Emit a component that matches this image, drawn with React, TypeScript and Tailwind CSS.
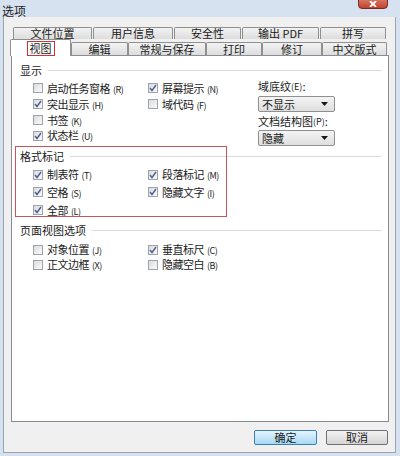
import React from "react";

const FONT = { fontFamily: '"SimSun", "Noto Sans CJK SC", "Liberation Sans", sans-serif' };

function Box({ checked }: { checked?: boolean }) {
  return (
    <span className="relative inline-flex h-[10px] w-[10px] shrink-0 items-center justify-center border border-[#9ea3ab] bg-gradient-to-br from-[#dcdcdc] to-[#fafafa]">
      {checked && (
        <svg viewBox="0 0 10 10" className="absolute h-[10px] w-[10px]">
          <path d="M2 5 L4 7.5 L8 2" fill="none" stroke="#4b5f96" strokeWidth="1.4" />
        </svg>
      )}
    </span>
  );
}

function Check({ label, k, checked, w }: { label: string; k: string; checked?: boolean; w: string }) {
  return (
    <div className={`flex items-center gap-[4px] ${w}`}>
      <Box checked={checked} />
      <span className="text-[11px] leading-none tracking-[-0.5px] text-[#1a1a1a]">
        {label}
        <span className="ml-[3px] text-[9px]">({k})</span>
      </span>
    </div>
  );
}

function Header({ text }: { text: string }) {
  return (
    <div className="flex h-[12px] items-center gap-[6px]">
      <span className="text-[11px] leading-none text-[#1a1a1a]">{text}</span>
      <span className="mr-[7px] h-px flex-1 bg-[#dadada]" />
    </div>
  );
}

function Select({ value }: { value: string }) {
  return (
    <div className="flex h-[16px] w-[77px] items-center justify-between rounded-[2px] border border-[#8e8f8f] bg-gradient-to-b from-[#f4f4f4] to-[#dedede] pl-[3px] pr-[6px]">
      <span className="text-[11px] leading-none text-[#1a1a1a]">{value}</span>
      <svg viewBox="0 0 7 4" className="h-[4px] w-[7px]">
        <path d="M0 0 L7 0 L3.5 4 Z" fill="#1a1a1a" />
      </svg>
    </div>
  );
}

function BackTab({ label, w }: { label: string; w: string }) {
  return (
    <div className={`flex h-[12px] items-center justify-center rounded-t-[2px] border border-b-0 border-[#8e8f8f] bg-gradient-to-b from-[#f3f3f3] to-[#dddddd] ${w}`}>
      <span className="text-[11px] leading-none text-[#1a1a1a]">{label}</span>
    </div>
  );
}

function FrontTab({ label, w }: { label: string; w: string }) {
  return (
    <div className={`flex h-[13px] items-center justify-center rounded-t-[2px] border border-b-0 border-[#8e8f8f] bg-gradient-to-b from-[#f3f3f3] to-[#dddddd] ${w}`}>
      <span className="text-[11px] leading-none text-[#1a1a1a]">{label}</span>
    </div>
  );
}

export default function App() {
  return (
    <div className="relative h-[456px] w-[400px] overflow-hidden bg-[#d6e2f0]" style={FONT}>
      {/* title */}
      <div className="h-[17px] pl-[2px]">
        <span className="relative top-[-3px] text-[12px] leading-none text-[#1e1e1e]">选项</span>
      </div>
      <div className="absolute right-[12px] top-[-3px] flex h-[12px] w-[30px] items-center justify-center rounded-b-[4px] border border-[#7a2a22] bg-gradient-to-b from-[#d8806e] to-[#c2412c] pt-[2px]">
        <svg viewBox="0 0 8 6" className="h-[6px] w-[8px]">
          <path d="M1 0 L7 6 M7 0 L1 6" stroke="#ffffff" strokeWidth="1.8" />
        </svg>
      </div>

      {/* dialog body */}
      <div className="ml-[3px] h-[436px] w-[393px] border-l border-r border-b border-[#9aa4b2] bg-[#f0f0f0]">
        <div className="pl-[9px] pt-[10px]">
          <div className="flex h-[12px] gap-[1px]">
            <BackTab label="文件位置" w="w-[79px]" />
            <BackTab label="用户信息" w="w-[80px]" />
            <BackTab label="安全性" w="w-[67px]" />
            <BackTab label="输出 PDF" w="w-[77px]" />
            <BackTab label="拼写" w="w-[66px]" />
          </div>
        </div>
        <div className="relative z-10 flex h-[16px] items-end pl-[6px]">
          <div className="relative top-[1px] flex h-[17px] w-[61px] items-center justify-center rounded-t-[2px] border border-b-0 border-[#8e8f8f] bg-white">
            <span className="border border-[#c9343b] px-[2px] py-[1px] text-[11px] leading-none text-[#1a1a1a]">视图</span>
          </div>
          <FrontTab label="编辑" w="w-[57px]" />
          <FrontTab label="常规与保存" w="w-[78px]" />
          <FrontTab label="打印" w="w-[56px]" />
          <FrontTab label="修订" w="w-[60px]" />
          <FrontTab label="中文版式" w="w-[65px]" />
        </div>

        {/* panel */}
        <div className="ml-[7px] h-[367px] w-[378px] border border-[#898c95] bg-white pl-[8px] pt-[8px]">
          <Header text="显示" />
          <div className="flex">
            <div className="pl-[13px] pt-[4px]">
              <div className="flex h-[16px]">
                <Check label="启动任务窗格" k="R" w="w-[115px]" />
                <Check label="屏幕提示" k="N" checked w="w-[100px]" />
              </div>
              <div className="flex h-[16px]">
                <Check label="突出显示" k="H" checked w="w-[115px]" />
                <Check label="域代码" k="F" w="w-[100px]" />
              </div>
              <div className="flex h-[16px]">
                <Check label="书签" k="K" w="w-[115px]" />
              </div>
              <div className="flex h-[15px]">
                <Check label="状态栏" k="U" checked w="w-[115px]" />
              </div>
            </div>
            <div className="ml-[10px] flex flex-col pt-[4px]">
              <span className="flex h-[12px] items-center text-[11px] leading-none text-[#1a1a1a]">
                域底纹<span className="text-[9px]">(E)</span>:
              </span>
              <div className="mt-[4px]">
                <Select value="不显示" />
              </div>
              <span className="mt-[3px] flex h-[12px] items-center text-[11px] leading-none text-[#1a1a1a]">
                文档结构图<span className="text-[9px]">(P)</span>:
              </span>
              <div className="mt-[3px]">
                <Select value="隐藏" />
              </div>
            </div>
          </div>

          <div className="relative mt-[1px]">
            <div className="pointer-events-none absolute left-[-5px] top-[-1px] h-[71px] w-[212px] border border-[#c8555a]" />
            <div className="pt-[3px]">
              <Header text="格式标记" />
            </div>
            <div className="pl-[13px] pt-[4px]">
              <div className="flex h-[17px]">
                <Check label="制表符" k="T" checked w="w-[115px]" />
                <Check label="段落标记" k="M" checked w="w-[100px]" />
              </div>
              <div className="flex h-[18px]">
                <Check label="空格" k="S" checked w="w-[115px]" />
                <Check label="隐藏文字" k="I" checked w="w-[100px]" />
              </div>
              <div className="flex h-[18px]">
                <Check label="全部" k="L" checked w="w-[115px]" />
              </div>
            </div>
          </div>

          <div className="mt-[5px]">
            <Header text="页面视图选项" />
          </div>
          <div className="pl-[13px] pt-[6px]">
            <div className="flex h-[15px]">
              <Check label="对象位置" k="J" w="w-[115px]" />
              <Check label="垂直标尺" k="C" checked w="w-[100px]" />
            </div>
            <div className="flex h-[15px]">
              <Check label="正文边框" k="X" w="w-[115px]" />
              <Check label="隐藏空白" k="B" w="w-[100px]" />
            </div>
          </div>
        </div>

        {/* buttons */}
        <div className="flex justify-end gap-[9px] pr-[7px] pt-[8px]">
          <button className="flex h-[15px] w-[63px] items-center justify-center rounded-[2px] border border-[#3c7fb1] bg-gradient-to-b from-[#e5f4fc] to-[#a7d9f5] text-[11px] leading-none text-[#1a1a1a]">
            确定
          </button>
          <button className="flex h-[15px] w-[62px] items-center justify-center rounded-[2px] border border-[#707070] bg-gradient-to-b from-[#f2f2f2] to-[#d5d5d5] text-[11px] leading-none text-[#1a1a1a]">
            取消
          </button>
        </div>
      </div>
    </div>
  );
}
